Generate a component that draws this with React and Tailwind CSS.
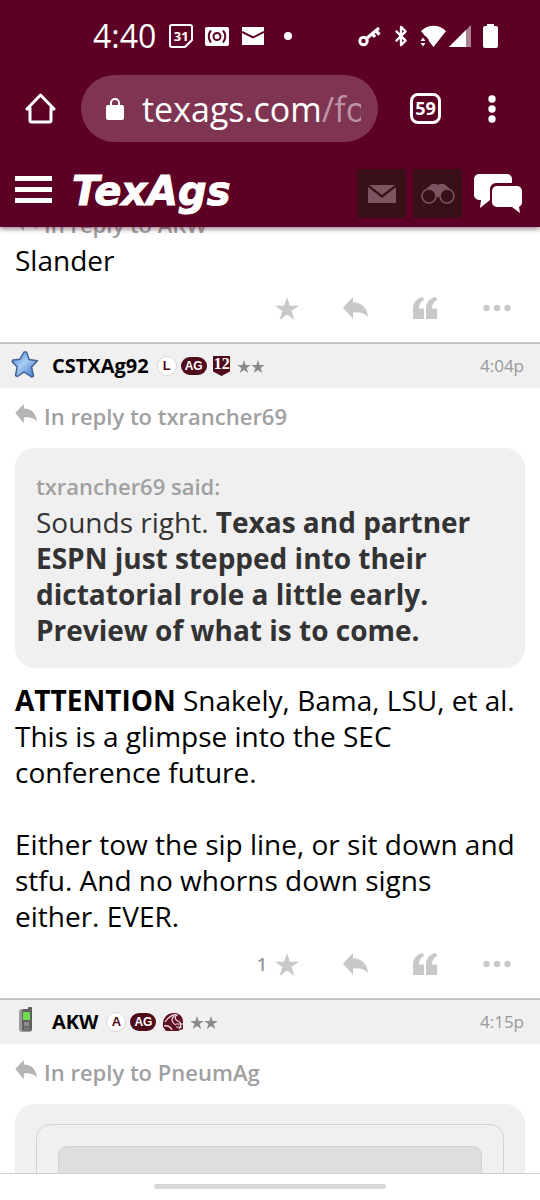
import { Bluetooth } from 'lucide-react';

const posts = [
  {
    id: 2,
    author: 'CSTXAg92',
    letter: 'L',
    emblem: 'twelfth',
    avatar: 'star',
    time: '4:04p',
    replyTo: 'txrancher69',
  },
  {
    id: 3,
    author: 'AKW',
    letter: 'A',
    emblem: 'helmet',
    avatar: 'phone',
    time: '4:15p',
    replyTo: 'PneumAg',
  },
];

const ReplyIcon = ({ className }) => (
  <svg viewBox="0 0 25 22" className={className} fill="currentColor" aria-hidden="true">
    <path d="M0 10.500 10 0v5.200C19 5.500 24.500 11 25 20c-4.500-4.500-9-5-15-4.500V22z" />
  </svg>
);

const StarIcon = ({ className }) => (
  <svg viewBox="0 0 24 23" className={className} fill="currentColor" aria-hidden="true">
    <path d="m12 0 2.900 8.700H24l-7.400 5.400 2.900 8.900-7.500-5.500L4.500 23l2.900-8.900L0 8.700h9.100z" />
  </svg>
);

const QuoteIcon = () => (
  <svg viewBox="0 0 24 22" className="h-[22px] w-6" fill="currentColor" aria-hidden="true">
    <path d="M0 22V12C0 5 4 1 10 0l1 3.200C8 4.500 6 7 5.800 11.500H11V22zM13 22V12c0-7 4-11 10-12l1 3.200c-3 1.300-5 3.800-5.200 8.300H24V22z" />
  </svg>
);

const DotsIcon = () => (
  <svg viewBox="0 0 28 8" className="h-2 w-7" fill="currentColor" aria-hidden="true">
    <circle cx="3.500" cy="4" r="3.200" />
    <circle cx="14" cy="4" r="3.200" />
    <circle cx="24.500" cy="4" r="3.200" />
  </svg>
);

const Avatar = ({ kind }) => {
  if (kind === 'star') {
    return (
      <svg viewBox="0 0 28 28" className="mb-1 h-7 w-7" aria-hidden="true">
        <defs>
          <linearGradient id="blueStar" x1="0" y1="0" x2="1" y2="1">
            <stop offset="0" stopColor="#3f7fd6" />
            <stop offset="0.45" stopColor="#a9cdf5" />
            <stop offset="1" stopColor="#2f6fc4" />
          </linearGradient>
        </defs>
        <path
          d="M13 2h2.500l2.500 7.500 8.500 1.200-6 6.300L22.500 26l-2 1-7.500-5-6.500 4.500-2-1L6.200 17 1 11.500l1-1.500 7-.8z"
          fill="url(#blueStar)"
          stroke="#42628f"
          strokeWidth="1.500"
          strokeLinejoin="round"
        />
      </svg>
    );
  }
  return (
    <svg viewBox="0 0 28 28" className="mb-1 h-7 w-7" aria-hidden="true">
      <rect x="17" y="1" width="4" height="8" rx="1" fill="#5a5a5a" />
      <rect x="8" y="3" width="13" height="23" rx="3" fill="#9a9a9a" />
      <rect x="11" y="3" width="10" height="22" rx="2" fill="#606060" />
      <rect x="12" y="6" width="7" height="8" fill="#6fdc50" />
      <rect x="13" y="16" width="5" height="4" fill="#8f8f8f" />
      <path d="M13 22h6M13 24h6" stroke="#858585" />
    </svg>
  );
};

const Emblem = ({ kind }) => {
  if (kind === 'twelfth') {
    return (
      <span className="relative flex h-5 w-[18px] justify-center text-white">
        <svg viewBox="0 0 18 20" className="absolute inset-0 h-5 w-[18px]" aria-hidden="true">
          <path d="M0 0h17v15.500L8.500 20 0 15.500z" fill="#500c1b" />
        </svg>
        <b className="relative font-['Liberation_Serif',serif] text-[16px] leading-4">12</b>
      </span>
    );
  }
  return (
    <svg viewBox="0 0 22 20" className="h-5 w-[22px]" aria-hidden="true">
      <path d="M1 15C0 6 5 1 12 1c6 0 9 4 9 9v7l-5 2H4z" fill="#5c1222" />
      <path d="M3 10c4-6 9-8 12-7-3 2-2 5 1 6s4 4 1 8M2 14c4-1 6 0 8 4M12 4c-3 3-3 6 2 9" fill="none" stroke="#efd9dd" strokeWidth="1.300" />
      <path d="M14 12h7M14 15h6" stroke="#efd9dd" />
    </svg>
  );
};

const PostHeader = ({ post }) => (
  <header className="flex h-[46px] items-center border-t-2 border-[#c0c0c0] bg-[#f0f0f0] pr-4 pl-[11px]">
    <Avatar kind={post.avatar} />
    <a href="#profile" className="mr-2 ml-[13px] text-[20px] leading-7 font-bold text-black">{post.author}</a>
    <div className="flex items-center gap-1 font-['Liberation_Sans',sans-serif]">
      <span className="flex h-5 w-5 items-center justify-center rounded-full border border-[#d8d8d8] bg-white text-[13px] font-bold text-[#500c1b]">
        {post.letter}
      </span>
      <span className="flex h-[18px] w-[26px] items-center justify-center rounded-full bg-[#500c1b] text-[12px] font-bold text-white">
        AG
      </span>
      <span className="mx-[2px]"><Emblem kind={post.emblem} /></span>
      <span className="flex text-[#8a8a8a]">
        <StarIcon className="h-[13px] w-[14px]" />
        <StarIcon className="h-[13px] w-[14px]" />
      </span>
    </div>
    <time className="ml-auto text-[17px] text-[#999]">{post.time}</time>
  </header>
);

const ReplyLine = ({ to }) => (
  <a href="#parent" className="flex h-[46px] items-start px-[15px] pt-[14px] text-[#a0a0a0]">
    <ReplyIcon className="mt-[2px] mr-[7px] h-[19px] w-[22px] text-[#b4b4b4]" />
    <span className="text-[22px] leading-7 font-semibold">In reply to {to}</span>
  </a>
);

const PostActions = ({ stars }) => (
  <div className="flex h-16 items-center justify-end pr-[5px] pb-1 text-[#c8c8c8]">
    <button type="button" aria-label="Star" className="flex items-center gap-2 pr-[22px]">
      {stars && <span className="text-[18px] font-semibold text-[#999]">{stars}</span>}
      <StarIcon className="h-[23px] w-6" />
    </button>
    <button type="button" aria-label="Reply" className="flex w-[69px] justify-center">
      <ReplyIcon className="h-[22px] w-[25px]" />
    </button>
    <button type="button" aria-label="Quote" className="flex w-[69px] justify-center">
      <QuoteIcon />
    </button>
    <button type="button" aria-label="More" className="flex w-[76px] justify-center">
      <DotsIcon />
    </button>
  </div>
);

const StatusBar = () => (
  <div className="flex h-[72px] items-center pr-[42px] pl-[93px]">
    <div className="flex items-center">
      <span className="text-[32px] leading-9">4:40</span>
      <span className="relative ml-[13px] flex h-6 w-6 items-center justify-center">
        <svg viewBox="0 0 24 24" className="absolute inset-0 h-6 w-6" fill="none" stroke="currentColor" strokeWidth="2" aria-hidden="true">
          <path d="M3 1h18a2 2 0 0 1 2 2v13l-7 7H3a2 2 0 0 1-2-2V3a2 2 0 0 1 2-2z" />
        </svg>
        <span className="relative text-[13px] leading-4 font-bold">31</span>
      </span>
      <svg viewBox="0 0 24 20" className="ml-3 h-5 w-6" aria-hidden="true">
        <rect width="24" height="19" y="1" rx="2" fill="currentColor" />
        <g fill="none" stroke="#5c0025" strokeWidth="2">
          <circle cx="12" cy="10.500" r="3.500" />
          <path d="M6 4.500c-3 3.500-3 8.500 0 12M18 4.500c3 3.500 3 8.500 0 12" />
        </g>
      </svg>
      <svg viewBox="0 0 22 18" className="ml-[13px] h-[18px] w-[22px]" aria-hidden="true">
        <path d="M0 0h22v18H0z" fill="currentColor" />
        <path d="m0 5 11 5.500L22 5" fill="none" stroke="#5c0025" strokeWidth="2" />
      </svg>
      <span className="ml-5 h-2 w-2 rounded-full bg-white" />
    </div>
    <div className="ml-auto flex items-center">
      <svg viewBox="0 0 24 22" className="h-[22px] w-6" fill="none" stroke="currentColor" aria-hidden="true">
        <circle cx="5.500" cy="16" r="3.700" strokeWidth="3" />
        <path d="M8.500 13.500 21 3M18 6l3.500 3.500M14.500 9l2.500 3" strokeWidth="3.200" />
      </svg>
      <Bluetooth className="ml-[8px] h-[22px] w-[22px]" strokeWidth={2.5} />
      <svg viewBox="0 0 26 22" className="ml-2 h-[22px] w-[26px]" fill="currentColor" aria-hidden="true">
        <path d="M1 6c7-7 18-7 25 0L13.500 22z" />
        <path d="M0 11h5.500L9 15l-2 3.500-1 3.500H0z" fill="#5c0025" />
        <path d="M.5 16 3 12.500 5.500 16zM.5 18h5L3 21.500z" />
      </svg>
      <svg viewBox="0 0 22 22" className="ml-[3px] h-[22px] w-[22px]" fill="currentColor" aria-hidden="true">
        <path d="M0 22 22 0v22z" opacity=".5" />
        <path d="M0 22 17 5v17z" />
      </svg>
      <svg viewBox="0 0 15 24" className="ml-3 h-6 w-[15px]" fill="currentColor" aria-hidden="true">
        <path d="M4 0h7v2h2a2 2 0 0 1 2 2v18a2 2 0 0 1-2 2H2a2 2 0 0 1-2-2V4a2 2 0 0 1 2-2h2z" />
      </svg>
    </div>
  </div>
);

const BrowserBar = () => (
  <div className="flex h-[76px] items-start pt-[3px] pr-[44px] pl-[25px]">
    <button type="button" aria-label="Home" className="flex h-[67px] items-center">
      <svg viewBox="0 0 31 31" className="h-[31px] w-[31px]" fill="none" stroke="currentColor" strokeWidth="3" strokeLinejoin="round" strokeLinecap="round" aria-hidden="true">
        <path d="M5 15v12.500a1.500 1.500 0 0 0 1.500 1.500h18a1.500 1.500 0 0 0 1.500-1.500V15M2 16 15.500 2 29 16H26M2 16h3" />
      </svg>
    </button>
    <div className="ml-[25px] flex h-[67px] min-w-0 flex-1 items-center rounded-full bg-[#7f3552] pr-[17px] pl-[25px]">
      <svg viewBox="0 0 18 22" className="mr-[18px] h-[22px] w-[18px] shrink-0" aria-hidden="true">
        <rect y="7" width="18" height="15" rx="2" fill="currentColor" />
        <path d="M5 8V5a4 4 0 0 1 8 0v3" fill="none" stroke="currentColor" strokeWidth="2" />
      </svg>
      <span className="overflow-hidden text-[34px] leading-[46px] whitespace-nowrap">
        texags.com<span className="text-[#bd92a2]">/forums</span>
      </span>
    </div>
    <button type="button" aria-label="Tabs" className="mt-[18px] ml-8 flex h-[31px] w-[31px] items-center justify-center rounded-[8px] border-3 border-white text-[18px] font-bold">
      59
    </button>
    <button type="button" aria-label="Menu" className="ml-[47px] flex h-[67px] items-center">
      <svg viewBox="0 0 8 28" className="h-7 w-2" fill="currentColor" aria-hidden="true">
        <circle cx="4" cy="4" r="3.700" />
        <circle cx="4" cy="14" r="3.700" />
        <circle cx="4" cy="24" r="3.700" />
      </svg>
    </button>
  </div>
);

const SiteHeader = () => (
  <div className="flex h-[79px] items-center pt-[10px] pr-[18px] pl-[15px]">
    <button type="button" aria-label="Open menu" className="mb-[6px] flex w-[37px] flex-col gap-[6px]">
      <span className="h-[5px] bg-white" />
      <span className="h-[5px] bg-white" />
      <span className="h-[5px] bg-white" />
    </button>
    <a href="#home" className="mb-[4px] ml-5 font-['DejaVu_Sans',sans-serif] text-[40px] leading-10 font-bold italic [-webkit-text-stroke:1px_white]">TexAgs</a>
    <div className="ml-auto flex items-center gap-[7px] pt-[2px]">
      <button type="button" aria-label="Messages" className="flex h-[49px] w-[49px] items-center justify-center rounded-[3px] bg-[#3a1018] text-[#7a5560]">
        <svg viewBox="0 0 28 18" className="h-[18px] w-7" fill="currentColor" aria-hidden="true">
          <path d="M1 0h26L14 10zM0 2l14 11L28 2v16H0z" />
        </svg>
      </button>
      <button type="button" aria-label="Watched topics" className="flex h-[49px] w-[49px] items-center justify-center rounded-[3px] bg-[#3a1018] text-[#7a5560]">
        <svg viewBox="0 0 34 21" className="h-[21px] w-[34px]" aria-hidden="true">
          <path d="M5 6 11 1h4l2 1 2-1h4l6 5-6 2-5 6h-2l-5-6z" fill="currentColor" />
          <circle cx="8" cy="13" r="7" fill="#3a1018" stroke="currentColor" strokeWidth="1.600" />
          <circle cx="26" cy="13" r="7" fill="#3a1018" stroke="currentColor" strokeWidth="1.600" />
        </svg>
      </button>
      <button type="button" aria-label="Forums" className="ml-[5px]">
        <svg viewBox="0 0 48 39" className="h-[39px] w-12" fill="currentColor" aria-hidden="true">
          <path d="M5 0h28a5 5 0 0 1 5 5v4H22a6 6 0 0 0-6 6v11L6 34l1-8H5a5 5 0 0 1-5-5V5a5 5 0 0 1 5-5z" />
          <path d="M23 12h20a5 5 0 0 1 5 5v11a5 5 0 0 1-3 5l1 6-8-6H23a5 5 0 0 1-5-5V17a5 5 0 0 1 5-5z" />
        </svg>
      </button>
    </div>
  </div>
);

export default function App() {
  const [first, second] = posts;

  return (
    <div className="flex h-screen flex-col overflow-hidden bg-white font-['Open_Sans',sans-serif] text-black">
      <div className="relative z-10 shrink-0 bg-[#5c0025] text-white shadow-[0_2px_5px_rgba(60,0,25,0.5)]">
        <StatusBar />
        <BrowserBar />
        <SiteHeader />
      </div>

      <main className="min-h-0 flex-1 overflow-hidden text-[28px] leading-9">
        {/* Scrolled partly under the header */}
        <article className="-mt-[31px]">
          <ReplyLine to="AKW" />
          <p className="px-[15px]">Slander</p>
          <PostActions />
        </article>

        <article>
          <PostHeader post={first} />
          <ReplyLine to={first.replyTo} />
          <blockquote className="mx-[15px] my-[14px] rounded-[20px] bg-[#f0f0f0] px-[21px] py-5 text-[#333]">
            <cite className="block text-[22px] font-semibold text-[#a0a0a0] not-italic">txrancher69 said:</cite>
            <p>
              Sounds right. <b>Texas and partner ESPN just stepped into their dictatorial role a little early. Preview of what is to come.</b>
            </p>
          </blockquote>
          <div className="space-y-9 pr-5 pl-[15px]">
            <p>
              <b>ATTENTION</b> Snakely, Bama, LSU, et al. This is a glimpse into the SEC conference future.
            </p>
            <p>Either tow the sip line, or sit down and stfu. And no whorns down signs either. EVER.</p>
          </div>
          <PostActions stars={1} />
        </article>

        <article>
          <PostHeader post={second} />
          <ReplyLine to={second.replyTo} />
          <blockquote className="mx-[15px] mt-[14px] rounded-[20px] bg-[#f0f0f0] px-[21px] py-5">
            <div className="rounded-[14px] border border-[#d2d2d2] p-[21px]">
              <div className="h-24 rounded-[9px] border border-[#d2d2d2] bg-[#dedede]" />
            </div>
          </blockquote>
        </article>
      </main>

      <footer className="z-10 flex h-[27px] shrink-0 justify-center border-t border-[#cfcfcf] bg-white pt-[10px]">
        <div className="h-[5px] w-[43%] rounded-full bg-[#d8d8d8]" />
      </footer>
    </div>
  );
}
